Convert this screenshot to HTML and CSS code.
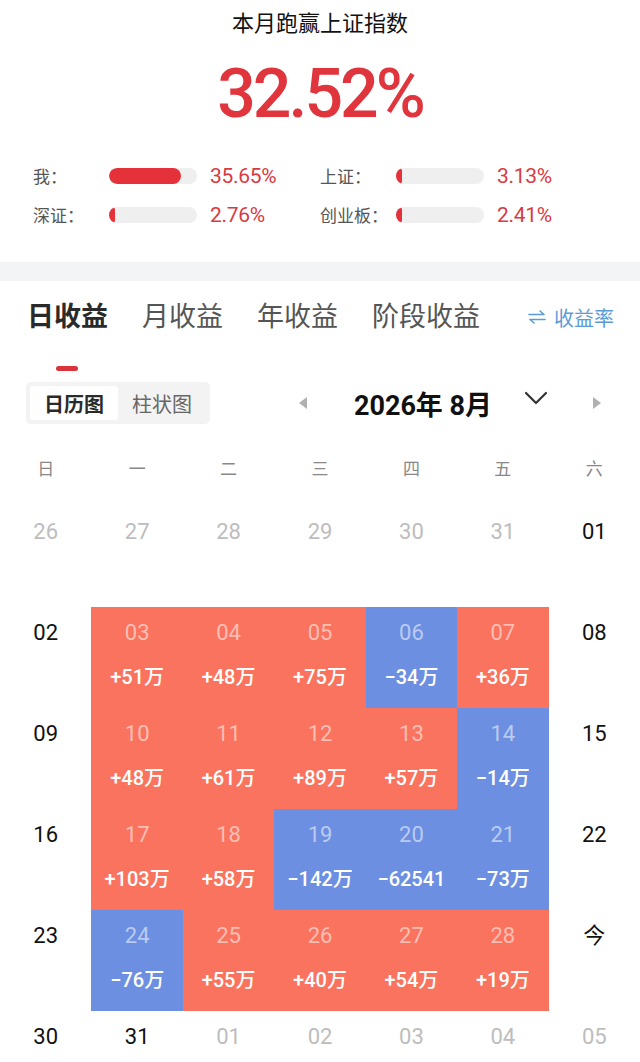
FILE: index.html
```html
<!DOCTYPE html>
<html lang="zh-CN">
<head>
<meta charset="utf-8">
<title>收益日历</title>
<link rel="stylesheet" href="styles.css">
</head>
<body>
<section class="summary">
  <h1 class="title">本月跑赢上证指数</h1>
  <div class="big">32.52%</div>
  <div class="stats">
    <div class="stat"><span class="lbl">我：</span><span class="bar"><span class="fill fill-me"></span></span><span class="val">35.65%</span></div>
    <div class="stat"><span class="lbl">上证：</span><span class="bar"><span class="fill fill-min"></span></span><span class="val">3.13%</span></div>
    <div class="stat"><span class="lbl">深证：</span><span class="bar"><span class="fill fill-min"></span></span><span class="val">2.76%</span></div>
    <div class="stat"><span class="lbl">创业板：</span><span class="bar"><span class="fill fill-min"></span></span><span class="val">2.41%</span></div>
  </div>
</section>
<div class="band"></div>
<section class="tabs-sec">
  <div class="tabs">
    <span class="tab active">日收益</span>
    <span class="tab">月收益</span>
    <span class="tab">年收益</span>
    <span class="tab">阶段收益</span>
    <span class="switch"><svg class="swap" width="18" height="14" viewBox="0 0 18 14"><path d="M1 4.5H16L12 1" fill="none" stroke="#5b9bd6" stroke-width="1.6" stroke-linecap="round" stroke-linejoin="round"/><path d="M17 9.5H2L6 13" fill="none" stroke="#5b9bd6" stroke-width="1.6" stroke-linecap="round" stroke-linejoin="round"/></svg>收益率</span>
  </div>
  <div class="indicator"></div>
</section>
<div class="controls">
  <div class="toggle">
    <span class="seg on">日历图</span>
    <span class="seg">柱状图</span>
  </div>
  <div class="nav">
    <svg class="tri" width="10" height="14" viewBox="0 0 10 14"><path d="M9 1V13L1 7Z" fill="#b0b0b0"/></svg>
    <span class="month">2026年 8月</span>
    <svg class="chev" width="24" height="14" viewBox="0 0 24 14"><path d="M2 2L12 12L22 2" fill="none" stroke="#333" stroke-width="2.2" stroke-linecap="round" stroke-linejoin="round"/></svg>
    <svg class="tri tri-r" width="10" height="14" viewBox="0 0 10 14"><path d="M1 1V13L9 7Z" fill="#b0b0b0"/></svg>
  </div>
</div>
<div class="weekdays">
  <span>日</span><span>一</span><span>二</span><span>三</span><span>四</span><span>五</span><span>六</span>
</div>
<div class="cal">
  <div class="cell out"><span class="d">26</span></div>
  <div class="cell out"><span class="d">27</span></div>
  <div class="cell out"><span class="d">28</span></div>
  <div class="cell out"><span class="d">29</span></div>
  <div class="cell out"><span class="d">30</span></div>
  <div class="cell out"><span class="d">31</span></div>
  <div class="cell"><span class="d">01</span></div>

  <div class="cell"><span class="d">02</span></div>
  <div class="cell up"><span class="d">03</span><span class="v">+51万</span></div>
  <div class="cell up"><span class="d">04</span><span class="v">+48万</span></div>
  <div class="cell up"><span class="d">05</span><span class="v">+75万</span></div>
  <div class="cell down"><span class="d">06</span><span class="v">−34万</span></div>
  <div class="cell up"><span class="d">07</span><span class="v">+36万</span></div>
  <div class="cell"><span class="d">08</span></div>

  <div class="cell"><span class="d">09</span></div>
  <div class="cell up"><span class="d">10</span><span class="v">+48万</span></div>
  <div class="cell up"><span class="d">11</span><span class="v">+61万</span></div>
  <div class="cell up"><span class="d">12</span><span class="v">+89万</span></div>
  <div class="cell up"><span class="d">13</span><span class="v">+57万</span></div>
  <div class="cell down"><span class="d">14</span><span class="v">−14万</span></div>
  <div class="cell"><span class="d">15</span></div>

  <div class="cell"><span class="d">16</span></div>
  <div class="cell up"><span class="d">17</span><span class="v">+103万</span></div>
  <div class="cell up"><span class="d">18</span><span class="v">+58万</span></div>
  <div class="cell down"><span class="d">19</span><span class="v">−142万</span></div>
  <div class="cell down"><span class="d">20</span><span class="v">−62541</span></div>
  <div class="cell down"><span class="d">21</span><span class="v">−73万</span></div>
  <div class="cell"><span class="d">22</span></div>

  <div class="cell"><span class="d">23</span></div>
  <div class="cell down"><span class="d">24</span><span class="v">−76万</span></div>
  <div class="cell up"><span class="d">25</span><span class="v">+55万</span></div>
  <div class="cell up"><span class="d">26</span><span class="v">+40万</span></div>
  <div class="cell up"><span class="d">27</span><span class="v">+54万</span></div>
  <div class="cell up"><span class="d">28</span><span class="v">+19万</span></div>
  <div class="cell"><span class="d">今</span></div>

  <div class="cell"><span class="d">30</span></div>
  <div class="cell"><span class="d">31</span></div>
  <div class="cell out"><span class="d">01</span></div>
  <div class="cell out"><span class="d">02</span></div>
  <div class="cell out"><span class="d">03</span></div>
  <div class="cell out"><span class="d">04</span></div>
  <div class="cell out"><span class="d">05</span></div>
</div>
</body>
</html>
```

FILE: styles.css
```css
* { box-sizing: border-box; }
html, body { margin: 0; padding: 0; background: #fff; }
body {
  width: 640px;
  overflow: hidden;
  font-family: Roboto, "Noto Sans CJK SC", sans-serif;
  color: #111;
}

.summary { padding-top: 9px; padding-bottom: 28px; }
.title {
  margin: 0;
  font-size: 22px;
  line-height: 30px;
  font-weight: 400;
  text-align: center;
  color: #111;
}
.big {
  margin-top: 15px;
  height: 80px;
  line-height: 80px;
  font-size: 68px;
  letter-spacing: -3px;
  text-align: center;
  color: #e0353d;
  font-weight: 500;
}
.stats {
  margin-top: 22px;
  padding-left: 33px;
  display: grid;
  grid-template-columns: 287px auto;
  grid-auto-rows: 39px;
}
.stat { display: flex; align-items: center; }
.lbl { width: 76px; font-size: 17px; color: #555; }
.bar {
  width: 88px;
  height: 16px;
  border-radius: 8px;
  background: #efefef;
  margin-right: 13px;
  display: flex;
  overflow: hidden;
}
.fill { height: 100%; border-radius: 8px; background: #e5323a; }
.fill-me { width: 72px; }
.fill-min { width: 6px; border-radius: 3px; }
.val { font-size: 21px; color: #d83a42; letter-spacing: -0.3px; }

.band { height: 19px; background: #f3f4f6; }

.tabs-sec { padding-top: 18px; }
.tabs {
  display: flex;
  align-items: center;
  padding: 0 26px 0 27px;
  gap: 34px;
  height: 36px;
}
.tab { font-size: 27px; line-height: 36px; color: #555; }
.tab.active { color: #2a2a2a; font-weight: 700; }
.switch {
  margin-left: auto;
  display: flex;
  align-items: center;
  font-size: 20px;
  color: #5b9bd6;
}
.swap { margin-right: 8px; }
.indicator {
  margin: 31px 0 0 56px;
  width: 22px;
  height: 5px;
  border-radius: 3px;
  background: #d9343a;
}

.controls {
  margin-top: 11px;
  height: 42px;
  display: flex;
  align-items: center;
  padding-left: 26px;
}
.toggle {
  width: 184px;
  height: 42px;
  background: #f3f3f3;
  border-radius: 5px;
  padding: 4px;
  display: flex;
}
.seg {
  flex: 1;
  display: flex;
  align-items: center;
  justify-content: center;
  font-size: 20px;
  color: #666;
  border-radius: 3px;
}
.seg.on { background: #fff; color: #2a2a2a; font-weight: 700; flex: 0 0 88px; }
.nav { display: flex; align-items: center; margin-left: 88px; }
.month {
  margin-left: 36px;
  width: 158px;
  text-align: center;
  font-size: 27px;
  font-weight: 700;
  color: #111;
}
.chev { margin-left: 22px; margin-top: -10px; }
.tri-r { margin-left: 44px; }

.weekdays {
  margin-top: 23px;
  height: 40px;
  margin-bottom: 19px;
  display: grid;
  grid-template-columns: repeat(7, 1fr);
  align-items: center;
  text-align: center;
  font-size: 17px;
  color: #888;
}

.cal {
  display: grid;
  grid-template-columns: repeat(7, 1fr);
  grid-auto-rows: 101px;
}
.cell {
  display: flex;
  flex-direction: column;
  align-items: center;
  padding-top: 13px;
}
.d { font-size: 22px; line-height: 26px; color: #111; }
.v { margin-top: 18px; font-size: 20px; line-height: 26px; color: #fff; font-weight: 500; }
.cell.out .d { color: #bdbdbd; }
.cell.up { background: #fa735e; }
.cell.down { background: #6c8fe1; }
.cell.up .d, .cell.down .d { color: rgba(255, 255, 255, 0.55); }
```
